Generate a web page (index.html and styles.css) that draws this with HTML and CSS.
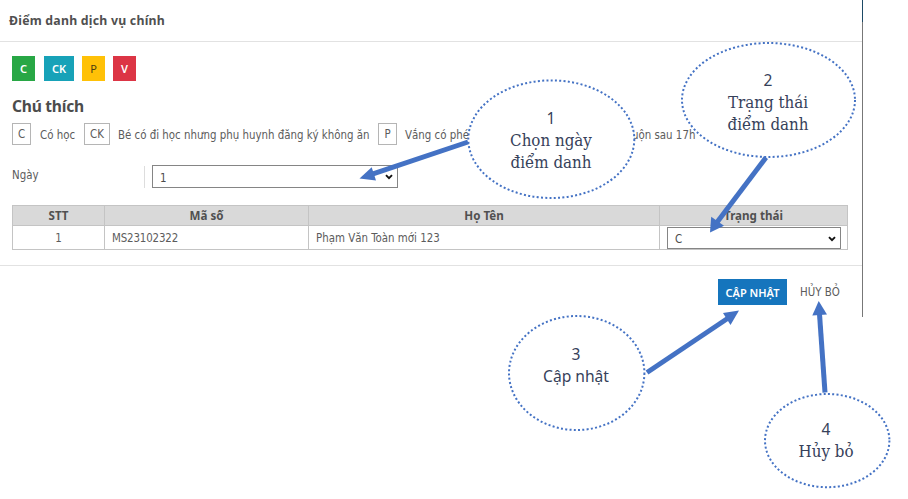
FILE: index.html
```html
<!DOCTYPE html>
<html lang="vi">
<head>
<meta charset="utf-8">
<title>Điểm danh dịch vụ chính</title>
<link rel="stylesheet" href="styles.css">
</head>
<body>
<main class="panel">
  <header class="panel-header"><h1>Điểm danh dịch vụ chính</h1></header>
  <section class="panel-body">
    <div class="badges">
      <span class="badge green">C</span><span class="badge teal wide">CK</span><span class="badge yellow">P</span><span class="badge red">V</span>
    </div>
    <h2>Chú thích</h2>
    <div class="legend">
      <span class="key">C</span><span class="meaning has">Có học</span>
      <span class="key wide">CK</span><span class="meaning nomeal">Bé có đi học nhưng phụ huynh đăng ký không ăn</span>
      <span class="key">P</span><span class="meaning leave">Vắng có phép</span>
      <span class="meaning late">muộn sau 17h</span>
    </div>
    <div class="field">
      <span class="label">Ngày</span>
      <div class="select day"><span>1</span><svg class="chevron" viewBox="0 0 8 6"><path d="M1 1.2 4 4.2 7 1.2"/></svg></div>
    </div>
    <table>
      <colgroup><col class="c1"><col class="c2"><col class="c3"><col class="c4"></colgroup>
      <thead><tr><th>STT</th><th>Mã số</th><th>Họ Tên</th><th>Trạng thái</th></tr></thead>
      <tbody><tr><td class="center">1</td><td class="code">MS23102322</td><td class="name">Phạm Văn Toàn mới 123</td>
      <td class="status"><div class="select"><span>C</span><svg class="chevron" viewBox="0 0 8 6"><path d="M1 1.2 4 4.2 7 1.2"/></svg></div></td></tr></tbody>
    </table>
  </section>
  <footer class="panel-footer"><span class="btn primary">CẬP NHẬT</span><span class="btn cancel">HỦY BỎ</span></footer>
</main>
<svg class="overlay" viewBox="0 0 908 499">
  <g class="bubble">
    <ellipse cx="551.3" cy="139.2" rx="83" ry="58.8"/>
    <ellipse cx="768.5" cy="100" rx="86.5" ry="57"/>
    <ellipse cx="576.7" cy="373" rx="67.7" ry="57"/>
    <ellipse cx="827.2" cy="440.6" rx="62.2" ry="46.6"/>
  </g>
  <g class="shaft">
    <path d="M468 142 373 173.8"/>
    <path d="M766 157.500 716.500 223"/>
    <path d="M647 372.500 727.500 318.500"/>
    <path d="M825 392.500 819.500 314"/>
  </g>
  <g class="head">
    <path d="M359.500 178.600 371.700 167.200 376 180.600Z"/>
    <path d="M710 232.500 711.200 216.800 724 225.800Z"/>
    <path d="M739 310.600 723 313 730.500 325Z"/>
    <path d="M818.700 301 812.300 315.400 827 314.600Z"/>
  </g>
</svg>
<div class="note n1"><b>1</b><span>Chọn ngày</span><span>điểm danh</span></div>
<div class="note n2"><b>2</b><span>Trạng thái</span><span>điểm danh</span></div>
<div class="note n3"><b>3</b><b>Cập nhật</b></div>
<div class="note n4"><b>4</b><span>Hủy bỏ</span></div>
</body>
</html>
```
FILE: styles.css
```css
* { box-sizing: border-box; }
body {
  margin: 0;
  width: 908px;
  height: 499px;
  overflow: hidden;
  position: relative;
  background: #fff;
  color: #5c5c5c;
  font: 11.4px/14px "DejaVu Sans Condensed", "Noto Sans", sans-serif;
}
.panel {
  width: 863px;
  height: 317px;
  border-image: linear-gradient(#fff 1px, #1d4a66 1px, #1d4a66 23px, #777 23px) 1;
  border-width: 0 1px 0 0;
  border-style: solid;
}
.panel-header {
  height: 42px;
  padding: 13px 9px;
  border-bottom: 1px solid #e2e2e2;
}
h1 {
  margin: 0;
  font: bold 12.3px/16px "Noto Sans", sans-serif;
  letter-spacing: .23px;
  color: #505050;
  white-space: nowrap;
}
.panel-body {
  height: 224px;
  padding: 14px 14px 0 12px;
  border-bottom: 1px solid #e2e2e2;
}
.badges { display: flex; gap: 8px; }
.badge {
  width: 23px;
  height: 25px;
  display: grid;
  place-items: center;
  color: #fff;
  font: 600 11px/14px "Noto Sans", sans-serif;
}
.badge.wide { width: 30px; }
.badge.green { background: #28a745; margin-right: 1px; }
.badge.teal { background: #17a2b8; }
.badge.yellow { background: #ffc107; color: #4a3d10; font-weight: 400; }
.badge.red { background: #dc3545; }
h2 {
  margin: 15px 0 7px;
  font: bold 15.6px/20px "Noto Sans", sans-serif;
  letter-spacing: -.25px;
  color: #4c4c4c;
}
.legend {
  display: flex;
  align-items: center;
  height: 22px;
  white-space: nowrap;
}
.key {
  flex: none;
  width: 19px;
  height: 22px;
  border: 1px solid #b5b5b5;
  display: grid;
  place-items: center;
}
.key.wide { width: 26px; }
.meaning { flex: none; margin-left: 9px; padding-top: 1px; }
.has { width: 44px; }
.nomeal { width: 260px; margin-left: 8px; }
.leave { width: 217px; margin-left: 8px; }
.late { margin-left: 0; }
.field { display: flex; margin-top: 20px; height: 23px; }
.label {
  width: 133px;
  height: 22px;
  padding-top: 2px;
  margin: 1px 7px 0 0;
  border-right: 1px solid #ddd;
}
.select {
  height: 23px;
  display: flex;
  align-items: center;
  justify-content: space-between;
  padding: 1px 4px 0 7px;
  border: 1px solid #858585;
  background: #fff;
  color: #4b4b4b;
}
.day { width: 246px; }
.day span { padding-top: 2px; }
.chevron { width: 8px; height: 6px; }
.chevron path { fill: none; stroke: #111; stroke-width: 1.9; }
table {
  margin-top: 17px;
  width: 836px;
  table-layout: fixed;
  border-collapse: collapse;
}
.c1 { width: 92px; } .c2 { width: 204px; } .c3 { width: 351px; } .c4 { width: 188px; }
th, td { border: 1px solid #c4c4c4; padding: 0 7px; }
th {
  height: 20px;
  background: #d9d9d9;
  color: #505050;
  font: bold 11.6px/14px "Noto Sans", sans-serif;
}
td { height: 24px; padding-top: 1px; }
.center { text-align: center; }
.code { letter-spacing: -.15px; }
.status .select { height: 22px; }
.status { padding-right: 6px; }
.panel-footer {
  display: flex;
  align-items: center;
  justify-content: flex-end;
  gap: 13px;
  padding: 13px 21px 0 0;
}
.btn {
  height: 26px;
  line-height: 27px;
  white-space: nowrap;
}
.primary {
  width: 69px;
  background: #1575bd;
  color: #fff;
  text-align: center;
  font-family: "Noto Sans", sans-serif;
  font-size: 11px;
  font-weight: 600;
}
.cancel { width: 41px; }
.overlay {
  position: absolute;
  inset: 0;
  width: 908px;
  height: 499px;
}
.bubble { fill: #fff; stroke: #4472c4; stroke-width: 2; stroke-dasharray: 2 2.3; }
.shaft { stroke: #4472c4; stroke-width: 5; }
.head { fill: #4472c4; }
.note {
  position: absolute;
  display: flex;
  flex-direction: column;
  align-items: center;
  color: #36415a;
  font: 16.8px/22px "DejaVu Serif Condensed", "Liberation Serif", serif;
  white-space: nowrap;
}
.note b { font: 400 15.6px/22px "Noto Sans", sans-serif; }
.n1 { left: 491px; top: 107px; width: 120px; }
.n2 { left: 708px; top: 69px; width: 120px; }
.n3 { left: 516px; top: 343px; width: 120px; }
.n4 { left: 766px; top: 418px; width: 120px; }
```
